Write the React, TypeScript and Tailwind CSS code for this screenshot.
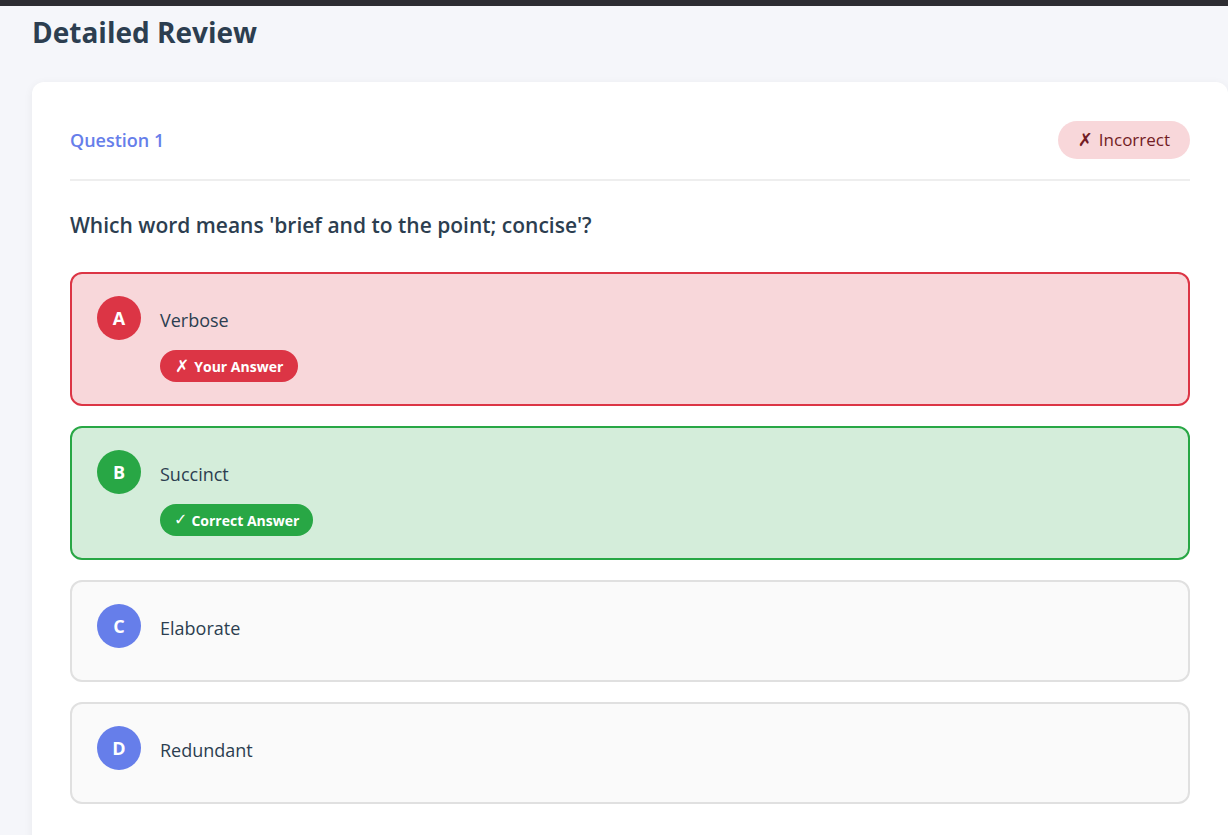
import React from 'react';

type Option = {
  letter: string;
  text: string;
  state: 'wrong' | 'correct' | 'neutral';
};

const options: Option[] = [
  { letter: 'A', text: 'Verbose', state: 'wrong' },
  { letter: 'B', text: 'Succinct', state: 'correct' },
  { letter: 'C', text: 'Elaborate', state: 'neutral' },
  { letter: 'D', text: 'Redundant', state: 'neutral' },
];

const boxStyles = {
  wrong: 'bg-[#f8d7da] border-[#dc3545]',
  correct: 'bg-[#d4edda] border-[#28a745]',
  neutral: 'bg-[#fafafa] border-[#e0e0e0]',
};

const circleStyles = {
  wrong: 'bg-[#dc3545]',
  correct: 'bg-[#28a745]',
  neutral: 'bg-[#667eea]',
};

function OptionRow({ option }: { option: Option }) {
  return (
    <div className={`flex items-start gap-[19px] rounded-[12px] border-2 px-[25px] pt-[22px] pb-[22px] ${boxStyles[option.state]}`}>
      <div className={`flex h-[44px] w-[44px] shrink-0 items-center justify-center rounded-full text-[18px] font-bold text-white ${circleStyles[option.state]}`}>
        {option.letter}
      </div>
      <div className="pt-[10px]">
        <p className="mb-[16px] text-[18px] leading-[28px] text-[#2c3e50]">{option.text}</p>
        {option.state === 'wrong' && (
          <span className="inline-flex h-[32px] items-center rounded-full bg-[#dc3545] px-[15px] text-[14px] font-bold text-white">
            <span className="mr-[5px] font-['DejaVu_Sans',sans-serif] text-[17px] leading-none">✗</span>Your Answer
          </span>
        )}
        {option.state === 'correct' && (
          <span className="inline-flex h-[32px] items-center rounded-full bg-[#28a745] px-[14px] text-[14px] font-bold text-white">
            <span className="mr-[4px] font-['DejaVu_Sans',sans-serif] text-[16px] font-bold leading-none">✓</span>Correct Answer
          </span>
        )}
      </div>
    </div>
  );
}

export default function App() {
  return (
    <div className="min-h-screen overflow-hidden bg-[#f5f6fa] font-['Open_Sans',sans-serif]">
      <div className="h-[6px] bg-[#2d2d32]" />
      <div className="pl-[32px]">
        <h1 className="mt-[9px] text-[28px] font-bold leading-[34px] text-[#2c3e50]">Detailed Review</h1>
        <div className="mt-[33px] rounded-tl-[12px] rounded-tr-[12px] bg-white px-[38px] pt-[39px] pb-[38px] shadow-[0_2px_10px_rgba(0,0,0,0.06)]">
          <div className="flex items-center justify-between border-b-2 border-[#eeeeee] pb-[20px]">
            <span className="text-[18px] font-semibold text-[#667eea]">Question 1</span>
            <span className="inline-flex h-[38px] items-center rounded-full bg-[#f8d7da] px-[20px] text-[17px] font-medium text-[#721c24]">
              <span className="mr-[6px] font-['DejaVu_Sans',sans-serif] text-[18px] leading-none">✗</span>Incorrect
            </span>
          </div>
          <h2 className="mt-[30px] mb-[33px] text-[21px] font-semibold leading-[28px] text-[#2c3e50]">
            Which word means 'brief and to the point; concise'?
          </h2>
          <div className="flex flex-col gap-[20px]">
            {options.map(o => (
              <OptionRow key={o.letter} option={o} />
            ))}
          </div>
        </div>
      </div>
    </div>
  );
}
